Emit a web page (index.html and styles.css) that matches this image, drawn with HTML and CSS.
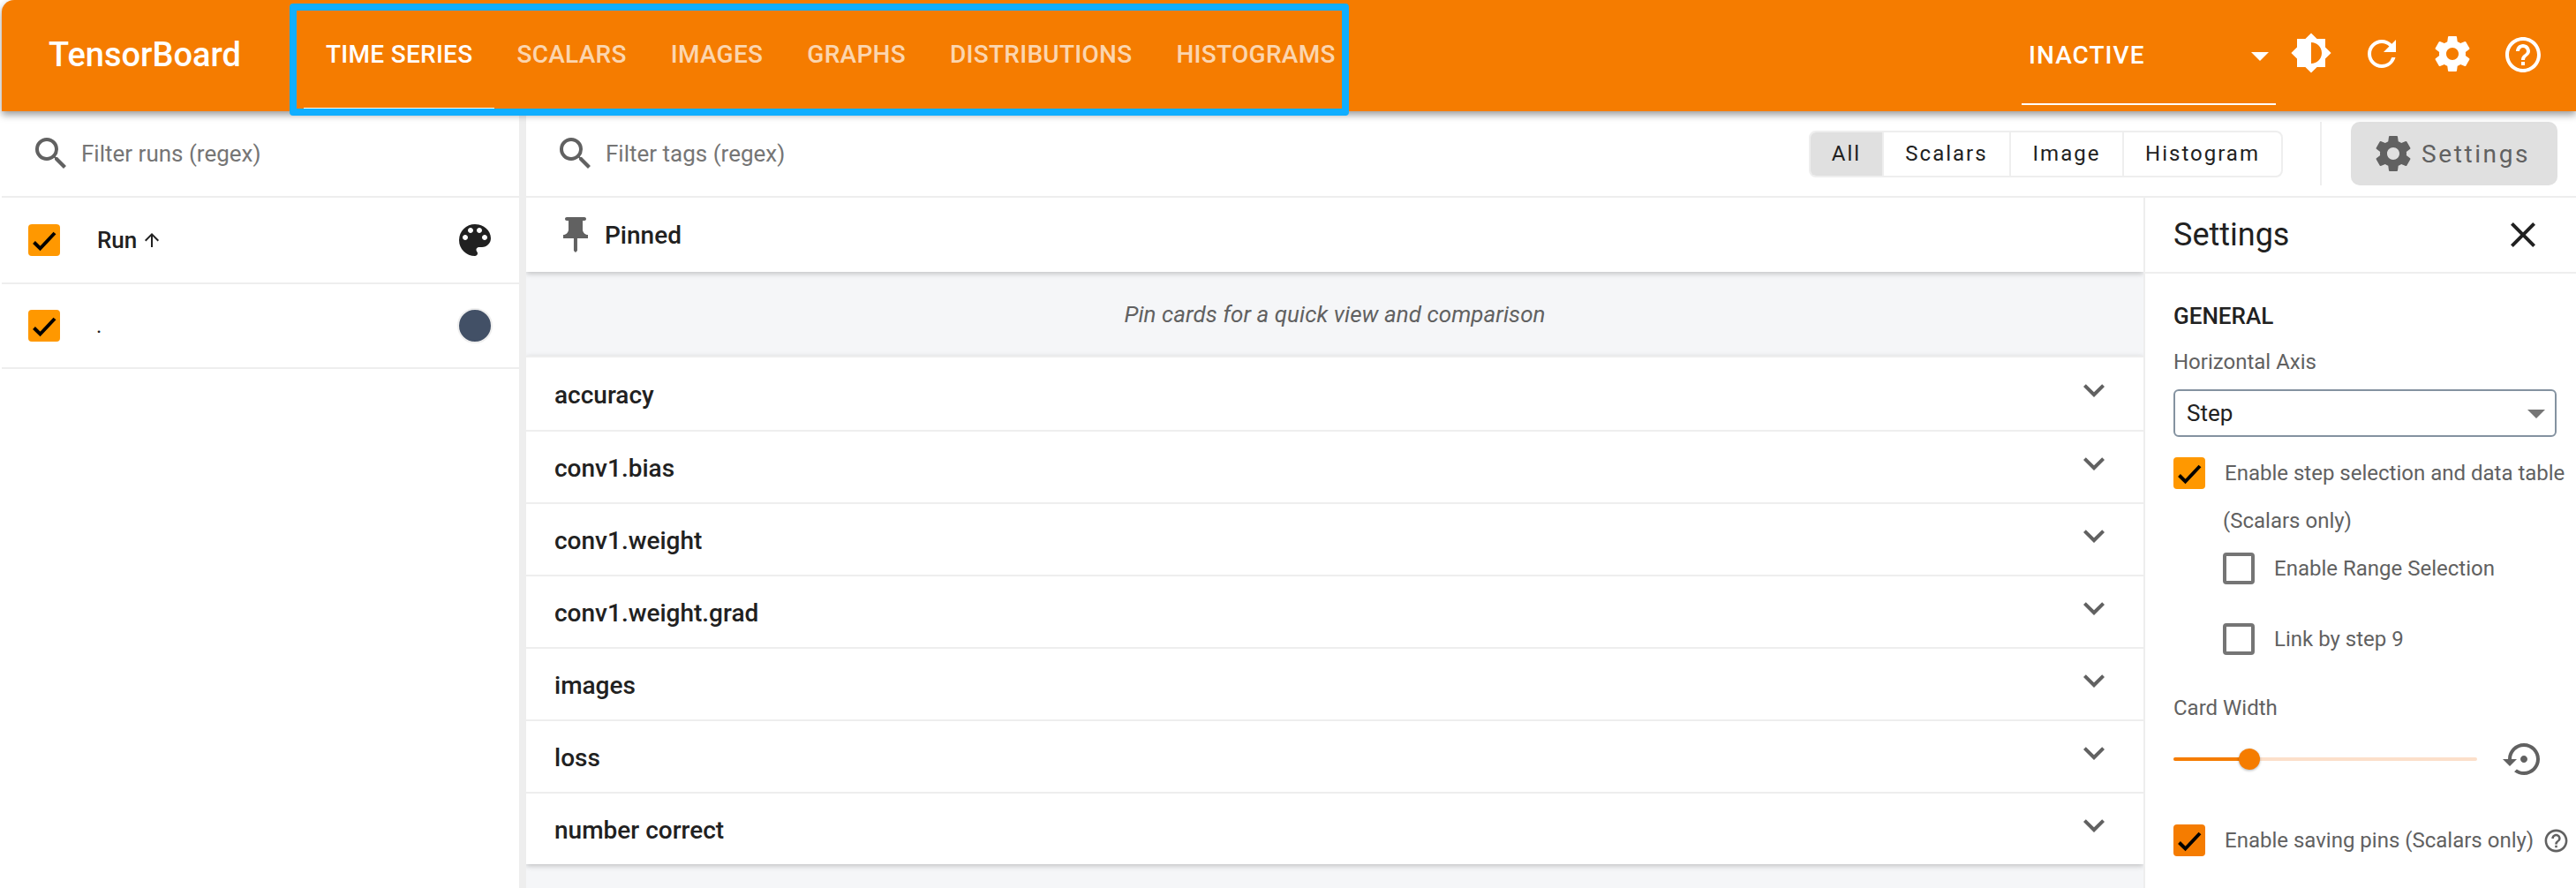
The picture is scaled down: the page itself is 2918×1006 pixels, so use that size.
FILE: index.html
```html
<!DOCTYPE html>
<html lang="en">
<head>
<meta charset="utf-8">
<title>TensorBoard</title>
<link rel="stylesheet" href="styles.css">
</head>
<body>
<svg class="defs" width="0" height="0" aria-hidden="true">
  <symbol id="i-search" viewBox="0 0 24 24"><path d="M15.5 14h-.79l-.28-.27A6.471 6.471 0 0 0 16 9.5 6.5 6.5 0 1 0 9.5 16c1.61 0 3.09-.59 4.23-1.57l.27.28v.79l5 4.99L20.49 19l-4.99-5zm-6 0C7.01 14 5 11.99 5 9.5S7.01 5 9.5 5 14 7.01 14 9.5 11.99 14 9.5 14z"/></symbol>
  <symbol id="i-gear" viewBox="0 0 24 24"><path d="M19.43 12.98c.04-.32.07-.64.07-.98s-.03-.66-.07-.98l2.11-1.65c.19-.15.24-.42.12-.64l-2-3.46c-.12-.22-.39-.3-.61-.22l-2.49 1c-.52-.4-1.08-.73-1.69-.98l-.38-2.65A.488.488 0 0 0 14 2h-4c-.25 0-.46.18-.49.42l-.38 2.65c-.61.25-1.17.59-1.69.98l-2.49-1c-.23-.09-.49 0-.61.22l-2 3.46c-.13.22-.07.49.12.64l2.11 1.65c-.04.32-.07.65-.07.98s.03.66.07.98l-2.11 1.65c-.19.15-.24.42-.12.64l2 3.46c.12.22.39.3.61.22l2.49-1c.52.4 1.08.73 1.69.98l.38 2.65c.03.24.24.42.49.42h4c.25 0 .46-.18.49-.42l.38-2.65c.61-.25 1.17-.59 1.69-.98l2.49 1c.23.09.49 0 .61-.22l2-3.46c.12-.22.07-.49-.12-.64l-2.11-1.65zM12 15.5c-1.93 0-3.5-1.57-3.5-3.5s1.57-3.5 3.5-3.5 3.5 1.57 3.5 3.5-1.57 3.5-3.5 3.5z"/></symbol>
  <symbol id="i-help" viewBox="0 0 24 24"><path d="M11 18h2v-2h-2v2zm1-16C6.48 2 2 6.48 2 12s4.48 10 10 10 10-4.48 10-10S17.52 2 12 2zm0 18c-4.41 0-8-3.59-8-8s3.59-8 8-8 8 3.59 8 8-3.59 8-8 8zm0-14c-2.21 0-4 1.79-4 4h2c0-1.1.9-2 2-2s2 .9 2 2c0 2-3 1.75-3 5h2c0-2.25 3-2.5 3-5 0-2.21-1.79-4-4-4z"/></symbol>
  <symbol id="i-chev" viewBox="0 0 24 24"><path d="M16.59 8.59L12 13.17 7.41 8.59 6 10l6 6 6-6z"/></symbol>
  <symbol id="i-check" viewBox="0 0 36 36"><path d="M6.500 20.500L13.500 27.500L30 10" fill="none" stroke="#000" stroke-width="4"/></symbol>
</svg>
<div class="app">
  <header class="topbar">
    <div class="logo">TensorBoard</div>
    <nav class="tabs">
      <span class="tab tab-active">TIME SERIES</span>
      <span class="tab">SCALARS</span>
      <span class="tab">IMAGES</span>
      <span class="tab">GRAPHS</span>
      <span class="tab">DISTRIBUTIONS</span>
      <span class="tab">HISTOGRAMS</span>
    </nav>
    <div class="top-right">
      <div class="mode-select"><span>INACTIVE</span><i class="mode-arrow"></i></div>
      <svg class="ic48 ic-white ic-sun" viewBox="0 0 24 24"><path fill-rule="evenodd" d="M20 15.310L23.310 12 20 8.690V4h-4.690L12 .69 8.690 4H4v4.690L.69 12 4 15.310V20h4.690L12 23.310 15.310 20H20v-4.690zM12 18V6c3.310 0 6 2.690 6 6s-2.690 6-6 6z"/></svg>
      <svg class="ic48 ic-white ic-reload" viewBox="0 0 24 24"><path d="M17.650 6.350A7.958 7.958 0 0 0 12 4c-4.420 0-7.990 3.580-7.990 8s3.570 8 7.990 8c3.730 0 6.840-2.550 7.730-6h-2.080A5.990 5.990 0 0 1 12 18c-3.310 0-6-2.690-6-6s2.690-6 6-6c1.660 0 3.140.69 4.220 1.780L13 11h7V4l-2.350 2.350z"/></svg>
      <svg class="ic48 ic-white ic-topgear"><use href="#i-gear"/></svg>
      <svg class="ic48 ic-white ic-tophelp"><use href="#i-help"/></svg>
    </div>
  </header>
  <div class="callout"></div>
  <div class="body-row">
    <aside class="runs">
      <div class="filter-row runs-filter">
        <svg class="ic48 ic-grey"><use href="#i-search"/></svg>
        <span class="placeholder">Filter runs (regex)</span>
      </div>
      <div class="run-row run-head">
        <span class="box box-amber"><svg><use href="#i-check"/></svg></span>
        <span class="run-name run-title">Run <svg class="sort-arrow" viewBox="0 0 24 24"><path d="M4 12l1.410 1.410L11 7.830V20h2V7.830l5.580 5.590L20 12l-8-8-8 8z"/></svg></span>
        <svg class="ic48 ic-dark palette" viewBox="0 0 24 24"><path d="M12 3a9 9 0 0 0 0 18c.83 0 1.500-.67 1.500-1.500 0-.39-.15-.74-.39-1.010-.23-.26-.38-.61-.38-.99 0-.83.67-1.500 1.500-1.500H16c2.760 0 5-2.240 5-5 0-4.420-4.030-8-9-8zm-5.500 9c-.83 0-1.500-.67-1.500-1.500S5.670 9 6.500 9 8 9.670 8 10.500 7.330 12 6.500 12zm3-4C8.670 8 8 7.330 8 6.500S8.670 5 9.500 5s1.500.67 1.500 1.500S10.330 8 9.500 8zm5 0c-.83 0-1.500-.67-1.500-1.500S13.670 5 14.500 5s1.500.67 1.500 1.500S15.330 8 14.500 8zm3 4c-.83 0-1.500-.67-1.500-1.500S16.670 9 17.500 9s1.500.67 1.500 1.500-.67 1.500-1.500 1.500z"/></svg>
      </div>
      <div class="run-row">
        <span class="box box-amber"><svg><use href="#i-check"/></svg></span>
        <span class="run-name run-value">.</span>
        <span class="run-dot"></span>
      </div>
    </aside>
    <main class="main">
      <div class="toolbar">
        <div class="filter-row main-filter">
          <svg class="ic48 ic-grey"><use href="#i-search"/></svg>
          <span class="placeholder">Filter tags (regex)</span>
        </div>
        <div class="segments">
          <span class="seg seg-all">All</span>
          <span class="seg seg-scalars">Scalars</span>
          <span class="seg seg-image">Image</span>
          <span class="seg seg-hist">Histogram</span>
        </div>
        <span class="tool-divider"></span>
        <div class="settings-btn">
          <svg class="ic48 ic-grey"><use href="#i-gear"/></svg>
          <span>Settings</span>
        </div>
      </div>
      <div class="content">
        <section class="cards">
          <div class="pinned">
            <svg class="ic48 ic-grey" viewBox="0 0 24 24"><path d="M16 9V4h1c.55 0 1-.45 1-1s-.45-1-1-1H7c-.55 0-1 .45-1 1s.45 1 1 1h1v5c0 1.660-1.340 3-3 3v2h5.970v7l1 1 1-1v-7H19v-2c-1.660 0-3-1.340-3-3z"/></svg>
            <span>Pinned</span>
          </div>
          <div class="pin-hint">Pin cards for a quick view and comparison</div>
          <div class="groups">
            <div class="group group-first"><span>accuracy</span><svg class="ic48 ic-grey"><use href="#i-chev"/></svg></div>
            <div class="group"><span>conv1.bias</span><svg class="ic48 ic-grey"><use href="#i-chev"/></svg></div>
            <div class="group"><span>conv1.weight</span><svg class="ic48 ic-grey"><use href="#i-chev"/></svg></div>
            <div class="group"><span>conv1.weight.grad</span><svg class="ic48 ic-grey"><use href="#i-chev"/></svg></div>
            <div class="group"><span>images</span><svg class="ic48 ic-grey"><use href="#i-chev"/></svg></div>
            <div class="group"><span>loss</span><svg class="ic48 ic-grey"><use href="#i-chev"/></svg></div>
            <div class="group group-last"><span>number correct</span><svg class="ic48 ic-grey"><use href="#i-chev"/></svg></div>
          </div>
        </section>
        <aside class="settings">
          <div class="settings-head">
            <span>Settings</span>
            <svg class="ic48 ic-dark" viewBox="0 0 24 24"><path d="M19 6.410L17.590 5 12 10.590 6.410 5 5 6.410 10.590 12 5 17.590 6.410 19 12 13.410 17.590 19 19 17.590 13.410 12z"/></svg>
          </div>
          <div class="settings-body">
            <h3 class="section-title">GENERAL</h3>
            <div class="field-label axis-label">Horizontal Axis</div>
            <div class="select"><span>Step</span><i class="select-arrow"></i></div>
            <div class="check-row row-step">
              <span class="box box-amber"><svg><use href="#i-check"/></svg></span>
              <span class="check-text">Enable step selection and data table</span>
            </div>
            <div class="field-label scalars-note">(Scalars only)</div>
            <div class="check-row sub-row row-range">
              <span class="box box-empty"></span>
              <span class="check-text">Enable Range Selection</span>
            </div>
            <div class="check-row sub-row row-link">
              <span class="box box-empty"></span>
              <span class="check-text">Link by step 9</span>
            </div>
            <div class="field-label card-label">Card Width</div>
            <div class="slider-row">
              <div class="slider"><div class="slider-fill"></div><div class="slider-thumb"></div></div>
              <svg class="ic48 ic-grey" viewBox="0 0 24 24"><path d="M14 12c0-1.100-.9-2-2-2s-2 .9-2 2 .9 2 2 2 2-.9 2-2zm-2-9c-4.970 0-9 4.030-9 9H0l4 4 4-4H5c0-3.870 3.130-7 7-7s7 3.130 7 7-3.130 7-7 7c-1.510 0-2.910-.49-4.060-1.300l-1.420 1.440C8.040 20.300 9.940 21 12 21c4.970 0 9-4.030 9-9s-4.030-9-9-9z"/></svg>
            </div>
            <div class="check-row row-pins">
              <span class="box box-orange"><svg><use href="#i-check"/></svg></span>
              <span class="check-text">Enable saving pins (Scalars only)</span>
              <svg class="ic-small ic-grey"><use href="#i-help"/></svg>
            </div>
          </div>
        </aside>
      </div>
    </main>
  </div>
</div>
</body>
</html>
```
FILE: styles.css
```css
* { box-sizing: border-box; }
html, body { margin: 0; height: 100%; overflow: hidden; background: #fff; }
body { font-family: Roboto, "Liberation Sans", sans-serif; color: #212121; }
.defs { position: absolute; }

.app { position: relative; height: 1006px; padding-left: 2px; display: flex; flex-direction: column; }

.ic48 { width: 48px; height: 48px; flex: none; display: block; }
.ic-small { width: 31px; height: 31px; flex: none; display: block; }
.ic-white { fill: #fff; }
.ic-grey { fill: #616161; }
.ic-dark { fill: #212121; }

/* top bar */
.topbar { position: relative; z-index: 2; height: 126px; flex: none; display: flex; align-items: stretch; background: #f57c00; border-top-left-radius: 14px; box-shadow: 0 4px 8px rgba(0, 0, 0, .4); color: #fff; }
.logo { width: 342px; padding: 44px 0 0 53px; font-size: 38px; font-weight: 500; line-height: 36px; }
.tabs { display: flex; align-items: stretch; }
.tab { display: block; height: 124px; padding: 47px 25px 0; font-size: 28px; font-weight: 500; line-height: 30px; letter-spacing: .28px; color: rgba(255, 255, 255, .7); border-bottom: 2px solid transparent; white-space: nowrap; }
.tab-active { color: #fff; border-bottom-color: #fff; }
.top-right { margin-left: auto; display: flex; align-items: flex-start; }
.mode-select { position: relative; width: 288px; height: 119px; margin-right: 14px; padding: 48px 0 0 8px; border-bottom: 2px solid #fff; font-size: 28px; font-weight: 500; line-height: 30px; letter-spacing: 1.05px; }
.mode-arrow { position: absolute; right: 8px; top: 59px; border: 10px solid transparent; border-top-color: #fff; border-bottom: 0; }
.ic-sun { margin: 36px 32px 0 2px; }
.ic-reload { margin: 37px 32px 0 0; }
.ic-topgear { margin: 37px 32px 0 0; }
.ic-tophelp { margin: 38px 36px 0 0; }

.callout { position: absolute; z-index: 3; left: 328px; top: 4px; width: 1200px; height: 127px; border: 8px solid #10aeff; border-radius: 4px; pointer-events: none; }

/* layout */
.body-row { flex: 1; display: flex; min-height: 0; }
.runs { width: 594px; flex: none; border-right: 8px solid #eee; }
.main { flex: 1; min-width: 0; display: flex; flex-direction: column; }

/* filters */
.filter-row { display: flex; align-items: center; gap: 10px; height: 98px; }
.runs-filter { padding-left: 32px; border-bottom: 2px solid #eee; }
.main-filter { padding-left: 32px; border: 0; height: 96px; }
.placeholder { font-size: 26px; color: #757575; }

/* runs */
.run-row { display: flex; align-items: center; height: 96px; padding: 0 30px; border-bottom: 2px solid #eee; }
.run-head { height: 98px; }
.run-name { flex: 1; margin-left: 42px; font-size: 24px; }
.run-value { margin-left: 41px; }
.run-title { display: flex; align-items: center; gap: 5px; font-size: 26px; font-weight: 500; }
.sort-arrow { width: 24px; height: 24px; fill: #212121; flex: none; }
.run-dot { width: 40px; height: 40px; border-radius: 50%; background: #425066; border: 2px solid #eee; }
.palette { margin-right: -4px; }

.box { width: 36px; height: 36px; flex: none; display: block; border-radius: 4px; }
.box svg { width: 36px; height: 36px; display: block; }
.box-amber { background: #ff9800; }
.box-orange { background: #f57c00; }
.box-empty { border: 4px solid #757575; }

/* toolbar */
.toolbar { height: 98px; flex: none; display: flex; align-items: center; padding-right: 21px; border-bottom: 2px solid #eee; }
.segments { margin-left: auto; height: 53px; display: flex; border: 2px solid #eee; border-radius: 8px; overflow: hidden; }
.seg { display: flex; align-items: center; justify-content: center; font-size: 24px; letter-spacing: 2px; border-left: 2px solid #eee; }
.seg-all { width: 81px; border-left: 0; background: #e0e0e0; }
.seg-scalars { width: 144px; }
.seg-image { width: 128px; }
.seg-hist { width: 180px; }
.tool-divider { width: 2px; height: 72px; margin: 0 33px 0 42px; background: #eee; }
.settings-btn { width: 234px; height: 72px; display: flex; align-items: center; gap: 8px; padding-left: 24px; border-radius: 10px; background: #e0e0e0; color: #616161; font-size: 28px; font-weight: 400; letter-spacing: 2.6px; }

/* cards */
.content { flex: 1; display: flex; min-height: 0; }
.cards { width: 1832px; flex: none; background: #f5f6f8; overflow: hidden; }
.pinned { height: 84px; display: flex; align-items: center; gap: 9px; padding-left: 32px; background: #fff; font-size: 28px; font-weight: 500; box-shadow: 0 2px 6px rgba(0, 0, 0, .22); position: relative; }
.pin-hint { height: 95px; padding-top: 1px; display: flex; align-items: center; justify-content: center; font-size: 26px; font-style: italic; letter-spacing: .05px; color: #616161; }
.groups { background: #fff; border-top: 2px solid #eee; box-shadow: 0 2px 6px rgba(0, 0, 0, .22); }
.group { height: 82px; padding: 0 32px; display: flex; align-items: center; justify-content: space-between; font-size: 28px; font-weight: 500; border-bottom: 2px solid #eee; }
.group span { padding-top: 2px; }
.group-first { height: 84px; }
.group-last { border-bottom: 0; height: 80px; }
.group .ic48 { margin-top: -8px; }

/* settings */
.settings { flex: 1; min-width: 0; border-left: 2px solid #eee; background: #fff; }
.settings-head { height: 86px; display: flex; align-items: center; justify-content: space-between; padding: 0 36px 0 32px; border-bottom: 2px solid #eee; font-size: 36px; }
.settings-body { padding-left: 32px; }
.section-title { margin: 0; padding-top: 30px; font-size: 26px; font-weight: 500; line-height: 36px; }
.field-label { font-size: 24px; line-height: 30px; color: #616161; }
.axis-label { margin-top: 19px; }
.select { position: relative; width: 434px; height: 54px; margin-top: 16px; padding-left: 13px; border: 2px solid #8492a0; border-radius: 6px; font-size: 26px; line-height: 50px; color: #212121; }
.select-arrow { position: absolute; right: 11px; top: 21px; border: 10px solid transparent; border-top-color: #757575; border-bottom: 0; }
.check-row { display: flex; align-items: center; gap: 22px; font-size: 24px; color: #616161; white-space: nowrap; }
.row-step { margin-top: 23px; }
.scalars-note { margin: 21px 0 0 56px; }
.sub-row { padding-left: 56px; }
.row-range { margin-top: 21px; }
.row-link { margin-top: 44px; }
.card-label { margin-top: 45px; }
.slider-row { display: flex; align-items: center; gap: 29px; margin-top: 19px; }
.slider { position: relative; width: 344px; height: 4px; flex: none; border-radius: 2px; background: #fcdfca; }
.slider-fill { width: 86px; height: 4px; border-radius: 2px; background: #f57c00; }
.slider-thumb { position: absolute; left: 74px; top: -10px; width: 24px; height: 24px; border-radius: 50%; background: #f57c00; box-shadow: 0 1px 3px rgba(0, 0, 0, .3); }
.row-pins { margin-top: 50px; }
.row-pins .ic-small { margin-left: -12px; }
```
